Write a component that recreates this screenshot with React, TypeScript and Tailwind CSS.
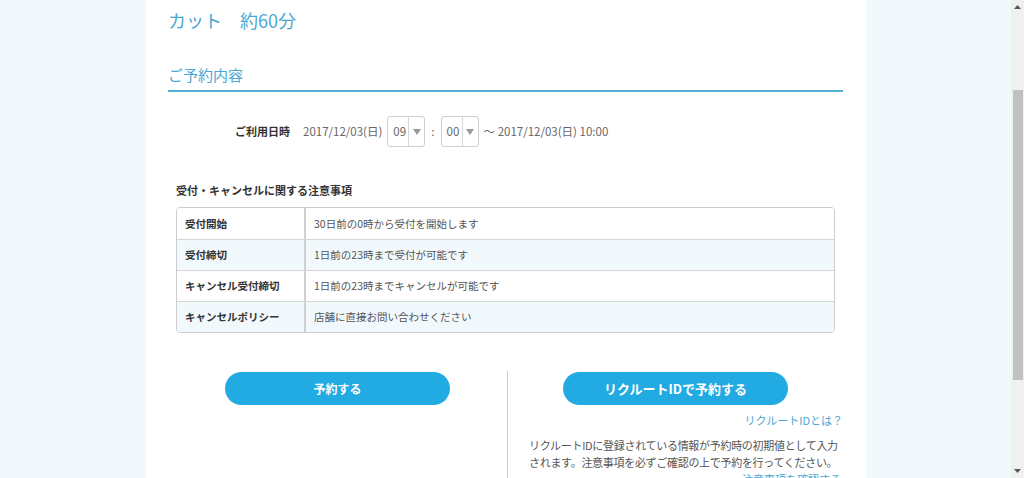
import React from "react";

const font = { fontFamily: '"Noto Sans CJK JP", "Noto Sans", sans-serif' };

function Select({ value }: { value: string }) {
  return (
    <div className="flex h-[31px] w-[38px] items-stretch rounded-[3px] border border-[#cfcfcf] bg-white">
      <div className="flex flex-1 items-center pl-[5px] text-[11.5px] text-[#666]">{value}</div>
      <div className="flex w-[16px] items-center justify-center border-l border-[#d8d8d8]">
        <svg width="8" height="6" viewBox="0 0 8 6">
          <path d="M0 0 L8 0 L4 6 Z" fill="#999" />
        </svg>
      </div>
    </div>
  );
}

const rows = [
  ["受付開始", "30日前の0時から受付を開始します"],
  ["受付締切", "1日前の23時まで受付が可能です"],
  ["キャンセル受付締切", "1日前の23時までキャンセルが可能です"],
  ["キャンセルポリシー", "店舗に直接お問い合わせください"],
];

export default function App() {
  return (
    <div className="flex h-[478px] w-[1024px] overflow-hidden bg-[#f2f9fd]" style={font}>
      <div className="w-[146px] shrink-0" />
      <main className="w-[720px] shrink-0 bg-white pl-[22px] pr-[23px]">
        <h1 className="pt-[7px] text-[18px] leading-[26px] text-[#4ca7d3]">カット　約60分</h1>
        <h2 className="mt-[31px] border-b-2 border-[#55b1d4] pb-[4px] text-[15px] leading-[22px] text-[#4ca7d3]">
          ご予約内容
        </h2>
        <div className="mt-[24px] flex items-center text-[11.5px] text-[#666]">
          <span className="ml-[67px] mr-[13px] text-[11px] font-bold text-[#333]">ご利用日時</span>
          <span className="mr-[5px]">2017/12/03(日)</span>
          <Select value="09" />
          <span className="mx-[6px]">:</span>
          <Select value="00" />
          <span className="ml-[5px]">～ 2017/12/03(日) 10:00</span>
        </div>
        <p className="ml-[8px] mt-[35px] text-[11px] font-bold leading-[16px] text-[#333]">
          受付・キャンセルに関する注意事項
        </p>
        <div className="ml-[8px] mr-[8px] mt-[9px] overflow-hidden rounded-[4px] border border-[#ccc]">
          {rows.map(([k, v], i) => (
            <div
              key={k}
              className={`flex h-[31px] items-center text-[10.5px] ${i > 0 ? "border-t border-[#d6d6d6]" : ""} ${
                i % 2 === 1 ? "bg-[#f2f9fd]" : "bg-white"
              }`}
            >
              <div className="flex h-full w-[129px] items-center border-r-2 border-[#d0d0d0] pl-[8px] font-bold text-[#333]">
                {k}
              </div>
              <div className="pl-[8px] text-[#555]">{v}</div>
            </div>
          ))}
        </div>
        <div className="mt-[38px] flex">
          <div className="flex w-[339px] shrink-0 justify-center pb-[40px] pt-[1px]">
            <button className="h-[33px] w-[225px] rounded-full bg-[#22aae2] text-[12px] font-bold text-white">
              予約する
            </button>
          </div>
          <div className="min-w-0 flex-1 border-l border-[#ccc] pl-[21px]">
            <div className="flex pl-[34px] pt-[1px]">
              <button className="h-[33px] w-[225px] rounded-full bg-[#22aae2] text-[13px] font-bold text-white">
                リクルートIDで予約する
              </button>
            </div>
            <p className="mt-[7px] text-right text-[11px] leading-[16px] text-[#4ca7d3]">リクルートIDとは？</p>
            <p className="mt-[9px] whitespace-nowrap text-[11px] leading-[17px] tracking-[-0.3px] text-[#555]">
              リクルートIDに登録されている情報が予約時の初期値として入力
              <br />
              されます。注意事項を必ずご確認の上で予約を行ってください。
            </p>
            <p className="pr-[2px] text-right text-[11px] leading-[16px] text-[#4ca7d3]">注意事項を確認する</p>
          </div>
        </div>
      </main>
      <div className="flex-1" />
      <div className="flex w-[13px] shrink-0 flex-col bg-[#f0f0f0]">
        <div className="flex h-[14px] items-center justify-center">
          <svg width="7" height="4" viewBox="0 0 7 4">
            <path d="M0 4 L3.5 0 L7 4 Z" fill="#555" />
          </svg>
        </div>
        <div className="mt-[76px] h-[290px] w-[10px] self-center bg-[#c1c1c1]" />
        <div className="flex-1" />
        <div className="flex h-[14px] items-center justify-center">
          <svg width="7" height="4" viewBox="0 0 7 4">
            <path d="M0 0 L3.5 4 L7 0 Z" fill="#555" />
          </svg>
        </div>
      </div>
    </div>
  );
}
